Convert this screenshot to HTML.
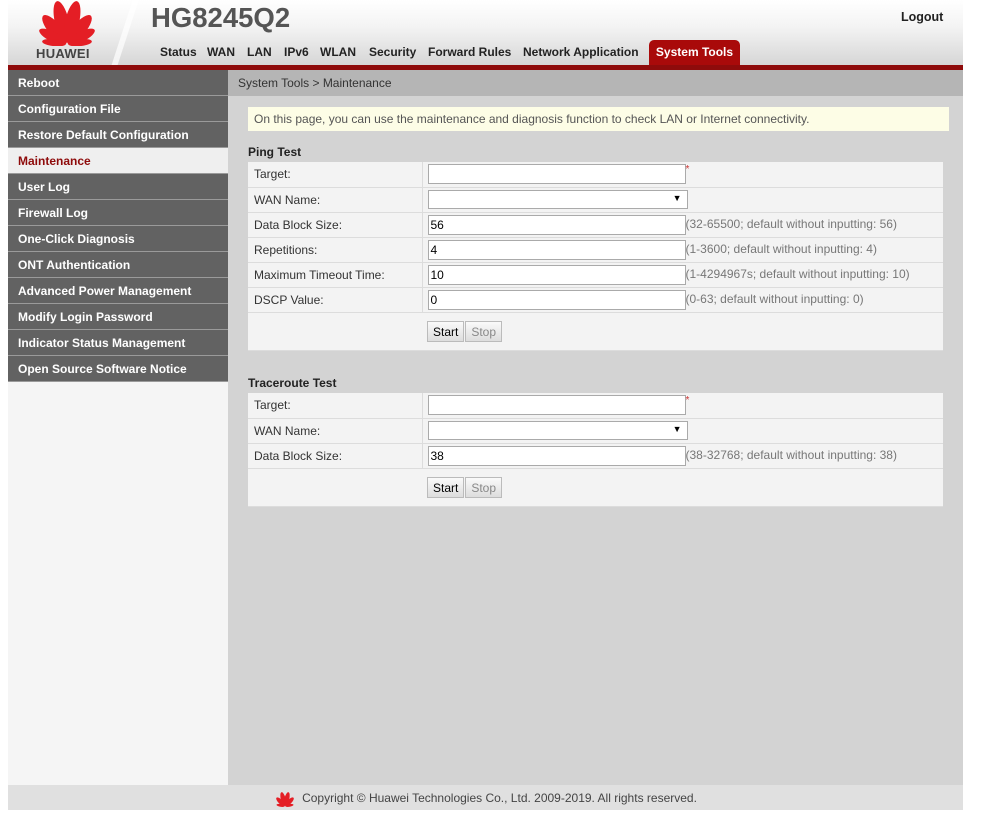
<!DOCTYPE html>
<html><head><meta charset="utf-8"><style>
*{margin:0;padding:0;box-sizing:border-box}
body{width:987px;height:831px;background:#fff;font-family:"Liberation Sans",Arial,sans-serif;font-size:12px;position:relative;overflow:hidden}
#hdr{position:absolute;left:8px;top:0;width:955px;height:65px;background:linear-gradient(#fff,#f4f4f4 40%,#d6d6d6)}
#redline{position:absolute;left:8px;top:65px;width:955px;height:5px;background:#8e0b0b}
.title{position:absolute;left:151px;top:2px;font-size:27.5px;font-weight:bold;color:#555}
.logout{position:absolute;left:901px;top:10px;font-size:12.5px;font-weight:bold;color:#222}
.nav{position:absolute;top:45px;font-size:12px;font-weight:bold;color:#222}
.navsel{position:absolute;left:649px;top:40px;width:91px;height:26px;background:#a90a0a;border-radius:5px 5px 0 0;color:#fff;font-weight:bold;font-size:12px;text-align:center;padding-top:5px}
.slash{position:absolute;left:122px;top:0;width:6px;height:66px;background:rgba(255,255,255,0.7);transform:skewX(-18deg)}
#side{position:absolute;left:8px;top:70px;width:220px;height:715px;background:#f5f5f5}
.si{height:26px;background:#626262;color:#fff;font-weight:bold;font-size:12px;padding:6px 0 0 10px;border-bottom:1px solid #9a9a9a}
.si.sel{background:#efefef;color:#8e0b0b}
#main{position:absolute;left:228px;top:70px;width:735px;height:715px;background:#d3d3d3}
.crumb{height:26px;background:#b5b5b5;color:#333;padding:6px 0 0 10px;font-size:12px}
.note{position:absolute;left:20px;top:37px;width:701px;height:24px;background:#fdfde6;color:#555;padding:5px 0 0 6px}
.h{position:absolute;left:20px;font-weight:bold;color:#222;font-size:12px}
table{position:absolute;left:20px;width:695px;border-collapse:collapse;background:#f3f3f3}
td{height:25px;border-bottom:1px solid #dcdcdc;color:#333;font-size:12px}
td.l{width:174px;padding-left:6px;border-right:1px solid #dcdcdc}
td.v{padding-left:5px;color:#777}
.in{display:inline-block;vertical-align:middle;width:258px;height:20px;background:#fff;border:1px solid #aaa;padding:2px 0 0 2px;color:#000;font-size:12px}
.sel2{display:inline-block;vertical-align:middle;width:260px;height:19px;background:#fff;border:1px solid #aaa;position:relative}
.sel2:after{content:"▼";position:absolute;right:5px;top:2px;font-size:9px;color:#000}
.star{color:#c33;font-size:10px;vertical-align:top}
.btns td{height:38px}
.b{display:inline-block;height:21px;border:1px solid #bbb;background:linear-gradient(#fafafa,#ddd);padding:3px 5px 0;font-size:12px;color:#000;margin-right:1px}
.b.d{color:#888}
#foot{position:absolute;left:8px;top:785px;width:955px;height:25px;background:#e0e0e0;color:#444;text-align:center;padding-top:6px;font-size:12px}
</style></head><body>
<div id="hdr"></div>
<svg style="position:absolute;left:35px;top:0" width="64" height="46" viewBox="0 0 64 46">
<g fill="#e41e25" transform="translate(32,44)">
<ellipse cx="0" cy="-23" rx="7" ry="21" transform="rotate(-13)"/>
<ellipse cx="0" cy="-23" rx="7" ry="21" transform="rotate(13)"/>
<ellipse cx="0" cy="-19" rx="6.5" ry="18" transform="rotate(-40)"/>
<ellipse cx="0" cy="-19" rx="6.5" ry="18" transform="rotate(40)"/>
<ellipse cx="0" cy="-16" rx="5" ry="15" transform="rotate(-63)"/>
<ellipse cx="0" cy="-16" rx="5" ry="15" transform="rotate(63)"/>
<ellipse cx="0" cy="-13" rx="3.5" ry="12" transform="rotate(-84)"/>
<ellipse cx="0" cy="-13" rx="3.5" ry="12" transform="rotate(84)"/>
</g></svg>
<div style="position:absolute;left:36px;top:46px;font-size:13px;font-weight:bold;color:#444;letter-spacing:0.3px">HUAWEI</div>
<div class="slash"></div>
<div class="title">HG8245Q2</div>
<div class="logout">Logout</div>
<div class="nav" style="left:160px">Status</div>
<div class="nav" style="left:207px">WAN</div>
<div class="nav" style="left:247px">LAN</div>
<div class="nav" style="left:284px">IPv6</div>
<div class="nav" style="left:320px">WLAN</div>
<div class="nav" style="left:369px">Security</div>
<div class="nav" style="left:428px">Forward Rules</div>
<div class="nav" style="left:523px">Network Application</div>
<div class="navsel">System Tools</div>
<div id="redline"></div>
<div id="side">
<div class="si">Reboot</div><div class="si">Configuration File</div><div class="si">Restore Default Configuration</div><div class="si sel">Maintenance</div><div class="si">User Log</div><div class="si">Firewall Log</div><div class="si">One-Click Diagnosis</div><div class="si">ONT Authentication</div><div class="si">Advanced Power Management</div><div class="si">Modify Login Password</div><div class="si">Indicator Status Management</div><div class="si">Open Source Software Notice</div>
</div>
<div id="main">
<div class="crumb">System Tools &gt; Maintenance</div>
<div class="note">On this page, you can use the maintenance and diagnosis function to check LAN or Internet connectivity.</div>
<div class="h" style="top:75px">Ping Test</div>
<table style="top:92px">
<tr><td class="l">Target:</td><td class="v"><span class="in"></span><span class="star">*</span></td></tr>
<tr><td class="l">WAN Name:</td><td class="v"><span class="sel2"></span></td></tr>
<tr><td class="l">Data Block Size:</td><td class="v"><span class="in">56</span>(32-65500; default without inputting: 56)</td></tr>
<tr><td class="l">Repetitions:</td><td class="v"><span class="in">4</span>(1-3600; default without inputting: 4)</td></tr>
<tr><td class="l">Maximum Timeout Time:</td><td class="v"><span class="in">10</span>(1-4294967s; default without inputting: 10)</td></tr>
<tr><td class="l">DSCP Value:</td><td class="v"><span class="in">0</span>(0-63; default without inputting: 0)</td></tr>
<tr class="btns"><td style="border-right:none"></td><td class="v"><span class="b">Start</span><span class="b d">Stop</span></td></tr>
</table>
<div class="h" style="top:306px">Traceroute Test</div>
<table style="top:323px">
<tr><td class="l">Target:</td><td class="v"><span class="in"></span><span class="star">*</span></td></tr>
<tr><td class="l">WAN Name:</td><td class="v"><span class="sel2"></span></td></tr>
<tr><td class="l">Data Block Size:</td><td class="v"><span class="in">38</span>(38-32768; default without inputting: 38)</td></tr>
<tr class="btns"><td style="border-right:none"></td><td class="v"><span class="b">Start</span><span class="b d">Stop</span></td></tr>
</table>
</div>
<div id="foot"><svg width="22" height="16" viewBox="0 0 64 46" style="vertical-align:middle;margin-right:6px"><g fill="#e41e25" transform="translate(32,44)"><ellipse cx="0" cy="-22" rx="7" ry="20" transform="rotate(-14)"/><ellipse cx="0" cy="-22" rx="7" ry="20" transform="rotate(14)"/><ellipse cx="0" cy="-18" rx="6.5" ry="17" transform="rotate(-45)"/><ellipse cx="0" cy="-18" rx="6.5" ry="17" transform="rotate(45)"/><ellipse cx="0" cy="-13" rx="4" ry="12" transform="rotate(-80)"/><ellipse cx="0" cy="-13" rx="4" ry="12" transform="rotate(80)"/></g></svg>Copyright © Huawei Technologies Co., Ltd. 2009-2019. All rights reserved.</div>
</body></html>
